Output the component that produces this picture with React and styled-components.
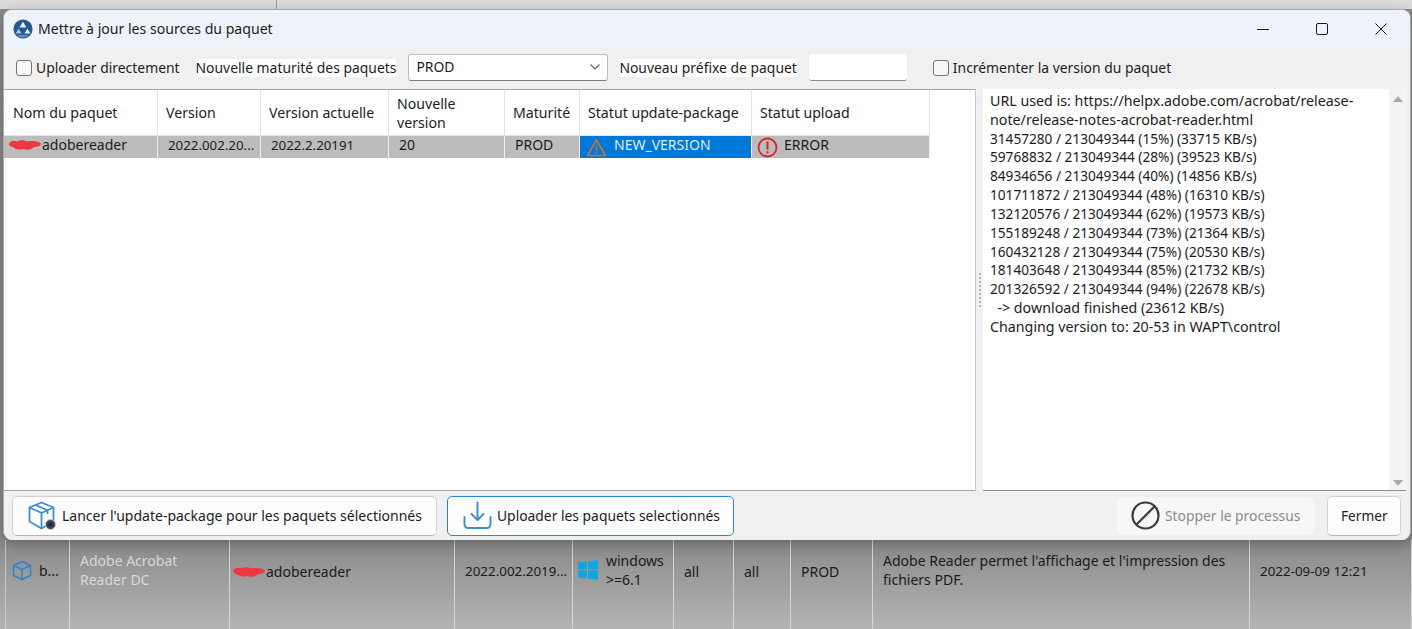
import React from "react";
import styled, { createGlobalStyle } from "styled-components";

const Global = createGlobalStyle`
  html, body { margin: 0; padding: 0; background: #b4b4b4; overflow: hidden; }
  body { font-family: "Noto Sans", "Open Sans", "Liberation Sans", sans-serif; font-size: 14px; color: #1c1c1c; }
`;

const Page = styled.div`
  width: 1412px;
  height: 629px;
  display: flex;
  flex-direction: column;
  overflow: hidden;
  background: linear-gradient(#8a8a8a 540px, #b4b4b4 629px);
`;

const TopStrip = styled.div`
  height: 9px;
  flex: none;
  background: #dcdcdc;
  padding-left: 276px;
  & i { display: block; width: 1px; height: 9px; background: #9c9c9c; }
`;

const Dialog = styled.div`
  flex: none;
  height: 531px;
  margin: 0 1px 0 3px;
  display: flex;
  flex-direction: column;
  background: #f0f0f0;
  border: 1px solid #a9a9a9;
  border-bottom: none;
  border-radius: 9px;
  box-sizing: border-box;
  overflow: hidden;
  position: relative;
  z-index: 1;
  box-shadow: 0 4px 14px rgba(0, 0, 0, 0.28);
`;

const TitleBar = styled.div`
  height: 38px;
  flex: none;
  display: flex;
  align-items: center;
  background: #eef2f9;
  padding-left: 9px;
  font-size: 14.1px;
`;

const TitleText = styled.span`
  flex: 1;
  white-space: nowrap;
  padding: 0 0 2px 5px;
`;

const WinButton = styled.div`
  width: 59px;
  height: 38px;
  display: flex;
  align-items: center;
  justify-content: center;
`;

const Toolbar = styled.div`
  height: 41px;
  flex: none;
  display: flex;
  align-items: center;
  padding-left: 12px;
  box-sizing: border-box;
  padding-bottom: 2px;
  white-space: nowrap;
  font-size: 13.9px;
`;

const Check = styled.label`
  display: flex;
  align-items: center;
  gap: 4px;
  margin-left: ${(p) => p.$left || 0}px;
`;

const CheckBox = styled.span`
  width: 14px;
  height: 14px;
  border: 1.5px solid #757575;
  border-radius: 3px;
  background: #f7f7f7;
  flex: none;
`;

const FieldLabel = styled.span`
  background: #fff;
  margin-left: ${(p) => p.$left}px;
  line-height: 18px;
`;

const Select = styled.div`
  width: 200px;
  height: 27px;
  margin-left: 12px;
  box-sizing: border-box;
  border: 1px solid #bcbcbc;
  border-bottom-color: #7c7c7c;
  border-radius: 3px;
  background: #fff;
  display: flex;
  align-items: center;
  justify-content: space-between;
  padding: 0 6px 2px 7px;
`;

const PrefixInput = styled.div`
  width: 98px;
  height: 27px;
  margin-left: 12px;
  box-sizing: border-box;
  background: #fff;
  border-bottom: 1px solid #8c8c8c;
  border-radius: 3px;
`;

const Panels = styled.div`
  flex: none;
  height: 402px;
  display: flex;
`;

const TablePanel = styled.div`
  width: 972px;
  box-sizing: border-box;
  background: #fff;
  border: 1px solid #a6a6a6;
  border-left: none;
  border-right-color: #c9c9c9;
`;

const Grid = styled.div`
  display: grid;
  grid-template-columns: 154px 103px 128px 116px 75px 172px 178px;
  width: 926px;
`;

const HeadCell = styled.div`
  height: 46px;
  display: flex;
  align-items: center;
  box-sizing: border-box;
  padding: 0 8px 0 ${(p) => p.$pad ?? 8}px;
  border-right: 1px solid #e4e4e4;
  border-bottom: 1px solid #e4e4e4;
  line-height: 19px;
  font-size: 14.15px;
`;

const RowCell = styled.div`
  height: 22px;
  display: flex;
  align-items: center;
  box-sizing: border-box;
  padding: 0 0 5px ${(p) => p.$pad ?? 10}px;
  background: ${(p) => (p.$active ? "#0078d7" : "#bcbcbc")};
  color: ${(p) => (p.$active ? "#dcebf8" : "#1c1c1c")};
  border-right: 1px solid #f1f1f1;
  white-space: nowrap;
  overflow: hidden;
  gap: ${(p) => p.$gap || 0}px;
  font-size: ${(p) => (p.$numeric ? "13.3px" : "14px")};
`;

const RowIcon = styled.svg`
  flex: none;
  margin-bottom: -5px;
`;

const Splitter = styled.div`
  width: 7px;
  flex: none;
  display: flex;
  flex-direction: column;
  align-items: center;
  justify-content: center;
  gap: 2px;
  padding-left: 1px;
  box-sizing: border-box;
  & i { width: 2px; height: 2px; background: #b8b8b8; }
`;

const LogPanel = styled.div`
  flex: 1;
  margin-right: 4px;
  background: #fff;
  border-bottom: 1px solid #8f8f8f;
  display: flex;
  min-width: 0;
`;

const LogText = styled.div`
  flex: 1;
  padding: 3px 0 0 7px;
`;

const LogLine = styled.div`
  height: 18.83px;
  line-height: 18.83px;
  white-space: pre;
  font-size: ${(p) => (p.$numeric ? "13.65px" : "14.25px")};
`;

const ScrollBar = styled.div`
  width: 17px;
  flex: none;
  background: #f3f3f3;
  display: flex;
  flex-direction: column;
  justify-content: space-between;
  align-items: center;
  padding: 7px 0 4px;
`;

const Footer = styled.div`
  flex: 1;
  display: flex;
  align-items: center;
  padding: 0 9px 0 8px;
  background: #f0f0f0;
`;

const Button = styled.div`
  height: 40px;
  box-sizing: border-box;
  width: ${(p) => p.$width}px;
  display: flex;
  align-items: center;
  gap: ${(p) => p.$gap ?? 5}px;
  padding-left: ${(p) => p.$pad ?? 14}px;
  margin-left: ${(p) => p.$left || 0}px;
  background: ${(p) => (p.$disabled ? "#f7f7f7" : "#fdfdfd")};
  border: ${(p) => (p.$primary ? "1.5px solid #2a86d6" : p.$disabled ? "1px solid #f0f0f0" : "1px solid #d2d2d2")};
  border-bottom-color: ${(p) => (p.$primary ? "#2a86d6" : p.$disabled ? "#f0f0f0" : "#b4b4b4")};
  border-radius: 5px;
  color: ${(p) => (p.$disabled ? "#8c8c8c" : "#1c1c1c")};
  font-size: ${(p) => p.$size || 14}px;
  white-space: nowrap;
`;

const Spacer = styled.div`
  flex: 1;
`;

const BackRow = styled.div`
  flex: 1;
  display: grid;
  grid-template-columns: 64px 160px 225px 118px 101px 60px 57px 82px 377px 1fr;
  margin-left: 5px;
  color: #1a1a1a;
  border-left: 1px solid #c8c8c8;
`;

const BackCell = styled.div`
  border-right: 1px solid #d6d6d6;
  display: flex;
  align-items: center;
  gap: ${(p) => p.$gap || 0}px;
  padding: 0 0 ${(p) => p.$bottom ?? 30}px ${(p) => p.$pad ?? 10}px;
  line-height: 19px;
  color: ${(p) => p.$color || "inherit"};
  white-space: ${(p) => (p.$wrap ? "normal" : "nowrap")};
  font-size: ${(p) => (p.$numeric ? "13.4px" : "14px")};
  min-width: 0;
`;

const Logo = () => (
  <svg width="20" height="20" viewBox="0 0 20 20" style={{ flex: "none" }}>
    <circle cx="10" cy="10" r="9.6" fill="#24588f" />
    <path d="M10 2.5L13.4 8.5H6.6Z" fill="#eaf1f9" />
    <path d="M5.6 9.8L8.6 14.6H2.6Z" fill="#a9c6e6" />
    <path d="M14.4 9.8L17.4 14.6H11.4Z" fill="#f4f8fc" />
    <path d="M4.2 16H15.8Q13.4 18.6 10 18.6Q6.6 18.6 4.2 16Z" fill="#5c8dc2" />
  </svg>
);

const BoxIcon = () => (
  <svg width="29" height="30" viewBox="0 0 29 30" fill="none" stroke="#3d8fc6" strokeWidth="1.8" strokeLinejoin="round" style={{ flex: "none" }}>
    <path d="M13.5 1.5L25.5 6.5V20.5L13.5 27.5L1.5 20.5V6.5Z" />
    <path d="M1.5 6.5L13.5 12L25.5 6.5M13.5 12V27.5" />
    <path d="M7.5 4L19.5 9.3V13" />
    <circle cx="22.5" cy="23.5" r="5" fill="#3b4454" stroke="#c9ccd2" strokeWidth="1" />
    <circle cx="22.5" cy="23.5" r="2" fill="#1f2733" stroke="none" />
  </svg>
);

const SmallCube = () => (
  <svg width="20" height="21" viewBox="0 0 20 21" fill="none" stroke="#2b86d0" strokeWidth="1.5" strokeLinejoin="round" style={{ flex: "none" }}>
    <path d="M10 1.5L18.5 5.5V15.5L10 19.5L1.5 15.5V5.5Z" />
    <path d="M1.5 5.5L10 9.5L18.5 5.5M10 9.5V19.5" />
  </svg>
);

const Scribble = ({ width }) => (
  <svg width={width} height="12" viewBox="0 0 34 12" style={{ flex: "none" }}>
    <path d="M1 5C2 2 6 1 9 2.5C13 0.5 16 1 19 2.5C23 1.5 30 2 33 4.5C33 7 29 8 26 8C23 11 19 11.5 15 10C11 11.5 7 10 5 8C3 8 1 7 1 5Z" fill="#ee3540" />
  </svg>
);

const columns = [
  "Nom du paquet",
  "Version",
  "Version actuelle",
  "Nouvelle version",
  "Maturité",
  "Statut update-package",
  "Statut upload",
];

const logLines = [
  ["URL used is: https://helpx.adobe.com/acrobat/release-"],
  ["note/release-notes-acrobat-reader.html"],
  ["31457280 / 213049344 (15%) (33715 KB/s)", true],
  ["59768832 / 213049344 (28%) (39523 KB/s)", true],
  ["84934656 / 213049344 (40%) (14856 KB/s)", true],
  ["101711872 / 213049344 (48%) (16310 KB/s)", true],
  ["132120576 / 213049344 (62%) (19573 KB/s)", true],
  ["155189248 / 213049344 (73%) (21364 KB/s)", true],
  ["160432128 / 213049344 (75%) (20530 KB/s)", true],
  ["181403648 / 213049344 (85%) (21732 KB/s)", true],
  ["201326592 / 213049344 (94%) (22678 KB/s)", true],
  ["  -> download finished (23612 KB/s)"],
  ["Changing version to: 20-53 in WAPT\\control"],
];

export default function App() {
  return (
    <Page>
      <Global />
      <TopStrip><i /></TopStrip>
      <Dialog>
        <TitleBar>
          <Logo />
          <TitleText>Mettre à jour les sources du paquet</TitleText>
          <WinButton>
            <svg width="12" height="12"><path d="M0 6.5H12" stroke="#1a1a1a" /></svg>
          </WinButton>
          <WinButton>
            <svg width="12" height="12"><rect x="0.5" y="0.5" width="11" height="11" rx="1.5" fill="none" stroke="#1a1a1a" /></svg>
          </WinButton>
          <WinButton>
            <svg width="12" height="12"><path d="M0.5 0.5L11.5 11.5M11.5 0.5L0.5 11.5" stroke="#1a1a1a" /></svg>
          </WinButton>
        </TitleBar>
        <Toolbar>
          <Check><CheckBox />Uploader directement</Check>
          <FieldLabel $left={16}>Nouvelle maturité des paquets</FieldLabel>
          <Select>
            PROD
            <svg width="12" height="8"><path d="M1.5 1.5L6 6L10.5 1.5" fill="none" stroke="#666" strokeWidth="1.2" /></svg>
          </Select>
          <FieldLabel $left={11}>Nouveau préfixe de paquet</FieldLabel>
          <PrefixInput />
          <Check $left={26}><CheckBox />Incrémenter la version du paquet</Check>
        </Toolbar>
        <Panels>
          <TablePanel>
            <Grid>
              {columns.map((c, i) => <HeadCell key={c} $pad={i === 0 ? 9 : 8}>{c}</HeadCell>)}
              <RowCell $pad={4}><Scribble width={34} />adobereader</RowCell>
              <RowCell $numeric>2022.002.20...</RowCell>
              <RowCell $numeric>2022.2.20191</RowCell>
              <RowCell>20</RowCell>
              <RowCell>PROD</RowCell>
              <RowCell $active $pad={6} $gap={7}>
                <RowIcon width="21" height="19" viewBox="0 0 21 19">
                  <path d="M10.5 2L19.5 17.5H1.5Z" fill="none" stroke="#c8703a" strokeWidth="1.6" strokeLinejoin="round" />
                  <path d="M10.5 7.5V13M10.5 14.2V15.6" stroke="#c8703a" strokeWidth="1.4" />
                </RowIcon>
                NEW_VERSION
              </RowCell>
              <RowCell $pad={5} $gap={6}>
                <RowIcon width="21" height="21" viewBox="0 0 21 21">
                  <circle cx="10.5" cy="10.5" r="9" fill="none" stroke="#d9222a" strokeWidth="1.8" />
                  <path d="M10.5 4.5V12.5M10.5 14.2V16.4" stroke="#d9222a" strokeWidth="2" />
                </RowIcon>
                ERROR
              </RowCell>
            </Grid>
          </TablePanel>
          <Splitter>{[0, 1, 2, 3, 4, 5, 6, 7, 8].map((i) => <i key={i} />)}</Splitter>
          <LogPanel>
            <LogText>
              {logLines.map(([text, numeric]) => <LogLine key={text} $numeric={numeric}>{text}</LogLine>)}
            </LogText>
            <ScrollBar>
              <svg width="10" height="6"><path d="M5 0L10 6H0Z" fill="#a8a8a8" /></svg>
              <svg width="10" height="6"><path d="M0 0H10L5 6Z" fill="#a8a8a8" /></svg>
            </ScrollBar>
          </LogPanel>
        </Panels>
        <Footer>
          <Button $width={425} $pad={15} $gap={5}>
            <BoxIcon />
            Lancer l'update-package pour les paquets sélectionnés
          </Button>
          <Button $primary $width={287} $left={10} $pad={15} $gap={5} $size={13.85}>
            <svg width="29" height="29" viewBox="0 0 29 29" fill="none" stroke="#3f8fc6" strokeWidth="1.9" strokeLinecap="round" strokeLinejoin="round" style={{ flex: "none" }}>
              <path d="M14.5 1.5V19M8.5 13L14.5 19L20.5 13" />
              <path d="M1.5 16V23Q1.5 27 5.5 27H23.5Q27.5 27 27.5 23V16" />
            </svg>
            Uploader les paquets selectionnés
          </Button>
          <Spacer />
          <Button $disabled $width={199} $pad={14} $gap={5} $size={13.85}>
            <svg width="29" height="29" viewBox="0 0 29 29" fill="none" stroke="#3c3c3c" strokeWidth="2.2" style={{ flex: "none" }}>
              <circle cx="14.5" cy="14.5" r="13" />
              <path d="M5.5 23.5L23.5 5.5" />
            </svg>
            Stopper le processus
          </Button>
          <Button $width={74} $left={12} $pad={13} $size={13.7}>Fermer</Button>
        </Footer>
      </Dialog>
      <BackRow>
        <BackCell $pad={6} $gap={7} $bottom={28}><SmallCube />b...</BackCell>
        <BackCell $color="#d8d8d8" $wrap>Adobe Acrobat<br />Reader DC</BackCell>
        <BackCell $pad={2} $bottom={26}><Scribble width={34} />adobereader</BackCell>
        <BackCell $numeric $bottom={26}>2022.002.2019...</BackCell>
        <BackCell $pad={5} $gap={8} $wrap>
          <svg width="20" height="20" viewBox="0 0 20 20" style={{ flex: "none" }}>
            <path d="M0 2.8L8.8 1.6V9.4H0ZM10 1.4L20 0V9.4H10ZM0 10.6H8.8V18.4L0 17.2ZM10 10.6H20V20L10 18.6Z" fill="#0ea5e0" />
          </svg>
          <span>windows<br />&gt;=6.1</span>
        </BackCell>
        <BackCell $bottom={26}>all</BackCell>
        <BackCell $bottom={26}>all</BackCell>
        <BackCell $bottom={26}>PROD</BackCell>
        <BackCell $wrap>Adobe Reader permet l'affichage et l'impression des fichiers PDF.</BackCell>
        <BackCell $numeric $bottom={26}>2022-09-09 12:21</BackCell>
      </BackRow>
    </Page>
  );
}
